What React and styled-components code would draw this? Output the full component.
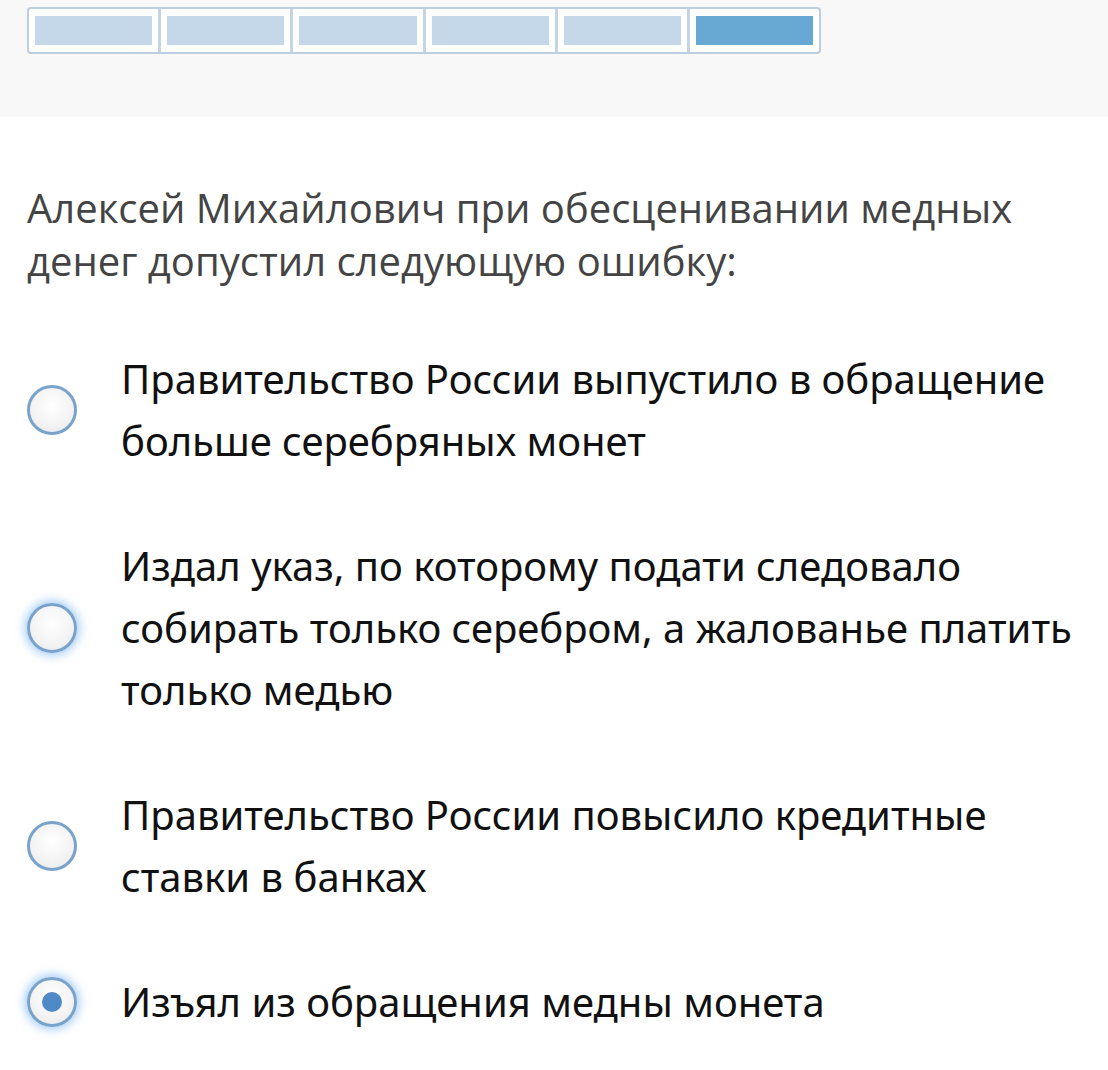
import React from "react";
import styled, { createGlobalStyle, css } from "styled-components";

const GlobalStyle = createGlobalStyle`
  html, body {
    margin: 0;
    padding: 0;
    background: #ffffff;
  }
`;

const Page = styled.div`
  width: 1108px;
  min-height: 1070px;
  overflow: hidden;
  background: #fff;
`;

const TopBand = styled.div`
  background: #f8f8f8;
  height: 117px;
  padding: 7px 0 0 27px;
  box-sizing: border-box;
`;

const Progress = styled.div`
  display: flex;
  width: 794px;
  height: 47px;
  box-sizing: border-box;
  border: 2px solid #bccfe0;
  border-radius: 4px;
  background: #fff;
  overflow: hidden;
`;

const Step = styled.div`
  flex: 1;
  padding: 7px 6px;
  box-sizing: border-box;
  border-left: ${(p) => (p.first ? "none" : "3px solid #c3d5e4")};
  display: flex;
`;

const StepFill = styled.div`
  flex: 1;
  background: ${(p) => (p.active ? "#68a9d3" : "#c4d8ea")};
`;

const Content = styled.div`
  padding: 64px 28px 0 27px;
`;

const Question = styled.div`
  font-family: "Open Sans", "Noto Sans", sans-serif;
  font-size: 40px;
  line-height: 53px;
  color: #444;
  margin-bottom: 61px;
`;

const Options = styled.div`
  display: flex;
  flex-direction: column;
  gap: 63px;
`;

const Option = styled.label`
  display: flex;
  align-items: center;
  gap: 44px;
`;

const Radio = styled.span`
  flex: none;
  width: 50px;
  height: 50px;
  box-sizing: border-box;
  border-radius: 50%;
  border: 3px solid #7aa3cc;
  background: radial-gradient(circle at 50% 40%, #ffffff 0%, #f3f3f3 60%, #e6e6e6 100%);
  display: flex;
  align-items: center;
  justify-content: center;
  ${(p) =>
    p.focused &&
    css`
      box-shadow: 0 0 8px 3px rgba(90, 165, 240, 0.5);
    `}
  &::after {
    content: "";
    width: 20px;
    height: 20px;
    border-radius: 50%;
    background: #4f89c6;
    display: ${(p) => (p.checked ? "block" : "none")};
  }
`;

const OptionText = styled.div`
  font-family: "Noto Sans", "Open Sans", sans-serif;
  font-size: 40px;
  line-height: 62px;
  color: #111;
`;

const options = [
  { text: "Правительство России выпустило в обращение больше серебряных монет" },
  {
    text: "Издал указ, по которому подати следовало собирать только серебром, а жалованье платить только медью",
    focused: true,
  },
  { text: "Правительство России повысило кредитные ставки в банках" },
  { text: "Изъял из обращения медны монета", focused: true, checked: true },
];

export default function App() {
  return (
    <Page>
      <GlobalStyle />
      <TopBand>
        <Progress>
          {[0, 1, 2, 3, 4, 5].map((i) => (
            <Step key={i} first={i === 0}>
              <StepFill active={i === 5} />
            </Step>
          ))}
        </Progress>
      </TopBand>
      <Content>
        <Question>
          Алексей Михайлович при обесценивании медных денег допустил следующую ошибку:
        </Question>
        <Options>
          {options.map((o, i) => (
            <Option key={i}>
              <Radio focused={o.focused} checked={o.checked} />
              <OptionText>{o.text}</OptionText>
            </Option>
          ))}
        </Options>
      </Content>
    </Page>
  );
}
